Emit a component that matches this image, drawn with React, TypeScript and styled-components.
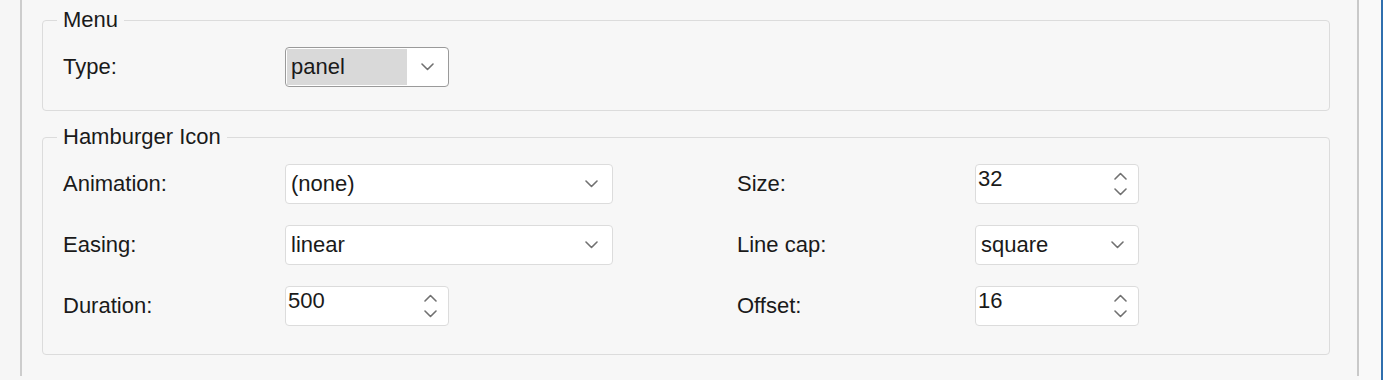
import React from "react";
import styled, { createGlobalStyle } from "styled-components";

const Global = createGlobalStyle`
  html, body { margin: 0; padding: 0; background: #f7f7f7; }
  body {
    font-family: "Liberation Sans", Arial, sans-serif;
    font-size: 22px;
    color: #1a1a1a;
  }
`;

const Frame = styled.div`
  display: flex;
  width: 1383px;
  height: 380px;
  overflow: hidden;
  background: #f7f7f7;
`;

const Gutter = styled.div`
  width: 20px;
  flex: none;
  background: #f6f6f6;
`;

const Panel = styled.div`
  width: 1339px;
  box-sizing: border-box;
  flex: none;
  height: 376px;
  border-left: 2px solid #cdcdcd;
  border-right: 2px solid #c9c9c9;
  padding: 7px 27px 0 20px;
  background: #f7f7f7;
  display: flex;
  flex-direction: column;
  gap: 13px;
`;

const RightStrip = styled.div`
  flex: 1;
  background: #f9f9f9;
  border-right: 2px solid #2f6fae;
`;

const Group = styled.fieldset<{ $padBottom: number }>`
  margin: 0;
  border: 1px solid #dcdcdc;
  border-radius: 4px;
  padding: 14px 20px ${(p) => p.$padBottom}px 20px;
  min-width: 0;
`;

const Legend = styled.legend`
  margin-left: -6px;
  padding: 0 6px;
  font-size: 22px;
  line-height: 26px;
  color: #1a1a1a;
`;

const FormGrid = styled.div`
  display: grid;
  grid-template-columns: 222px 328px 124px 238px 164px;
  grid-auto-rows: 40px;
  row-gap: 21px;
  align-items: center;
`;

const Label = styled.div<{ $col: number }>`
  grid-column: ${(p) => p.$col};
  line-height: 26px;
  white-space: nowrap;
`;

const Control = styled.div<{ $col: number; $width: number }>`
  grid-column: ${(p) => p.$col};
  width: ${(p) => p.$width}px;
  height: 40px;
`;

const SelectBox = styled.div<{ $focused?: boolean }>`
  box-sizing: border-box;
  width: 100%;
  height: 100%;
  display: flex;
  align-items: stretch;
  justify-content: space-between;
  background: #ffffff;
  border: 1px solid ${(p) => (p.$focused ? "#9a9a9a" : "#dcdcdc")};
  border-radius: 4px;
  padding: 1px 14px 1px 1px;
`;

const SelectValue = styled.span<{ $highlight?: boolean }>`
  display: flex;
  align-items: center;
  box-sizing: border-box;
  width: 120px;
  padding-left: 4px;
  line-height: 26px;
  background: ${(p) => (p.$highlight ? "#d9d9d9" : "transparent")};
`;

const ChevronWrap = styled.span`
  display: flex;
  align-items: center;
`;

const NumberBox = styled.div`
  box-sizing: border-box;
  width: 100%;
  height: 100%;
  display: flex;
  justify-content: space-between;
  background: #ffffff;
  border: 1px solid #dcdcdc;
  border-radius: 4px;
  padding: 1px 11px 0 2px;
`;

const NumberValue = styled.span`
  align-self: flex-start;
  line-height: 26px;
`;

const Spinner = styled.span`
  display: flex;
  flex-direction: column;
  justify-content: center;
  gap: 8px;
  padding-bottom: 1px;
`;

const Chevron = ({ up }: { up?: boolean }) => (
  <svg width="13" height="8" viewBox="0 0 13 8" fill="none">
    <path
      d={up ? "M1 7 L6.5 1.5 L12 7" : "M1 1 L6.5 6.5 L12 1"}
      stroke="#717171"
      strokeWidth="1.6"
      strokeLinecap="round"
      strokeLinejoin="round"
    />
  </svg>
);

const Select = ({
  value,
  focused,
}: {
  value: string;
  focused?: boolean;
}) => (
  <SelectBox $focused={focused}>
    <SelectValue $highlight={focused}>{value}</SelectValue>
    <ChevronWrap>
      <Chevron />
    </ChevronWrap>
  </SelectBox>
);

const NumberInput = ({ value }: { value: string }) => (
  <NumberBox>
    <NumberValue>{value}</NumberValue>
    <Spinner>
      <Chevron up />
      <Chevron />
    </Spinner>
  </NumberBox>
);

export default function App() {
  return (
    <>
      <Global />
      <Frame>
        <Gutter />
        <Panel>
          <Group $padBottom={23}>
            <Legend>Menu</Legend>
            <FormGrid>
              <Label $col={1}>Type:</Label>
              <Control $col={2} $width={164}>
                <Select value="panel" focused />
              </Control>
            </FormGrid>
          </Group>
          <Group $padBottom={28}>
            <Legend>Hamburger Icon</Legend>
            <FormGrid>
              <Label $col={1}>Animation:</Label>
              <Control $col={2} $width={328}>
                <Select value="(none)" />
              </Control>
              <Label $col={4}>Size:</Label>
              <Control $col={5} $width={164}>
                <NumberInput value="32" />
              </Control>

              <Label $col={1}>Easing:</Label>
              <Control $col={2} $width={328}>
                <Select value="linear" />
              </Control>
              <Label $col={4}>Line cap:</Label>
              <Control $col={5} $width={164}>
                <Select value="square" />
              </Control>

              <Label $col={1}>Duration:</Label>
              <Control $col={2} $width={164}>
                <NumberInput value="500" />
              </Control>
              <Label $col={4}>Offset:</Label>
              <Control $col={5} $width={164}>
                <NumberInput value="16" />
              </Control>
            </FormGrid>
          </Group>
        </Panel>
        <RightStrip />
      </Frame>
    </>
  );
}
